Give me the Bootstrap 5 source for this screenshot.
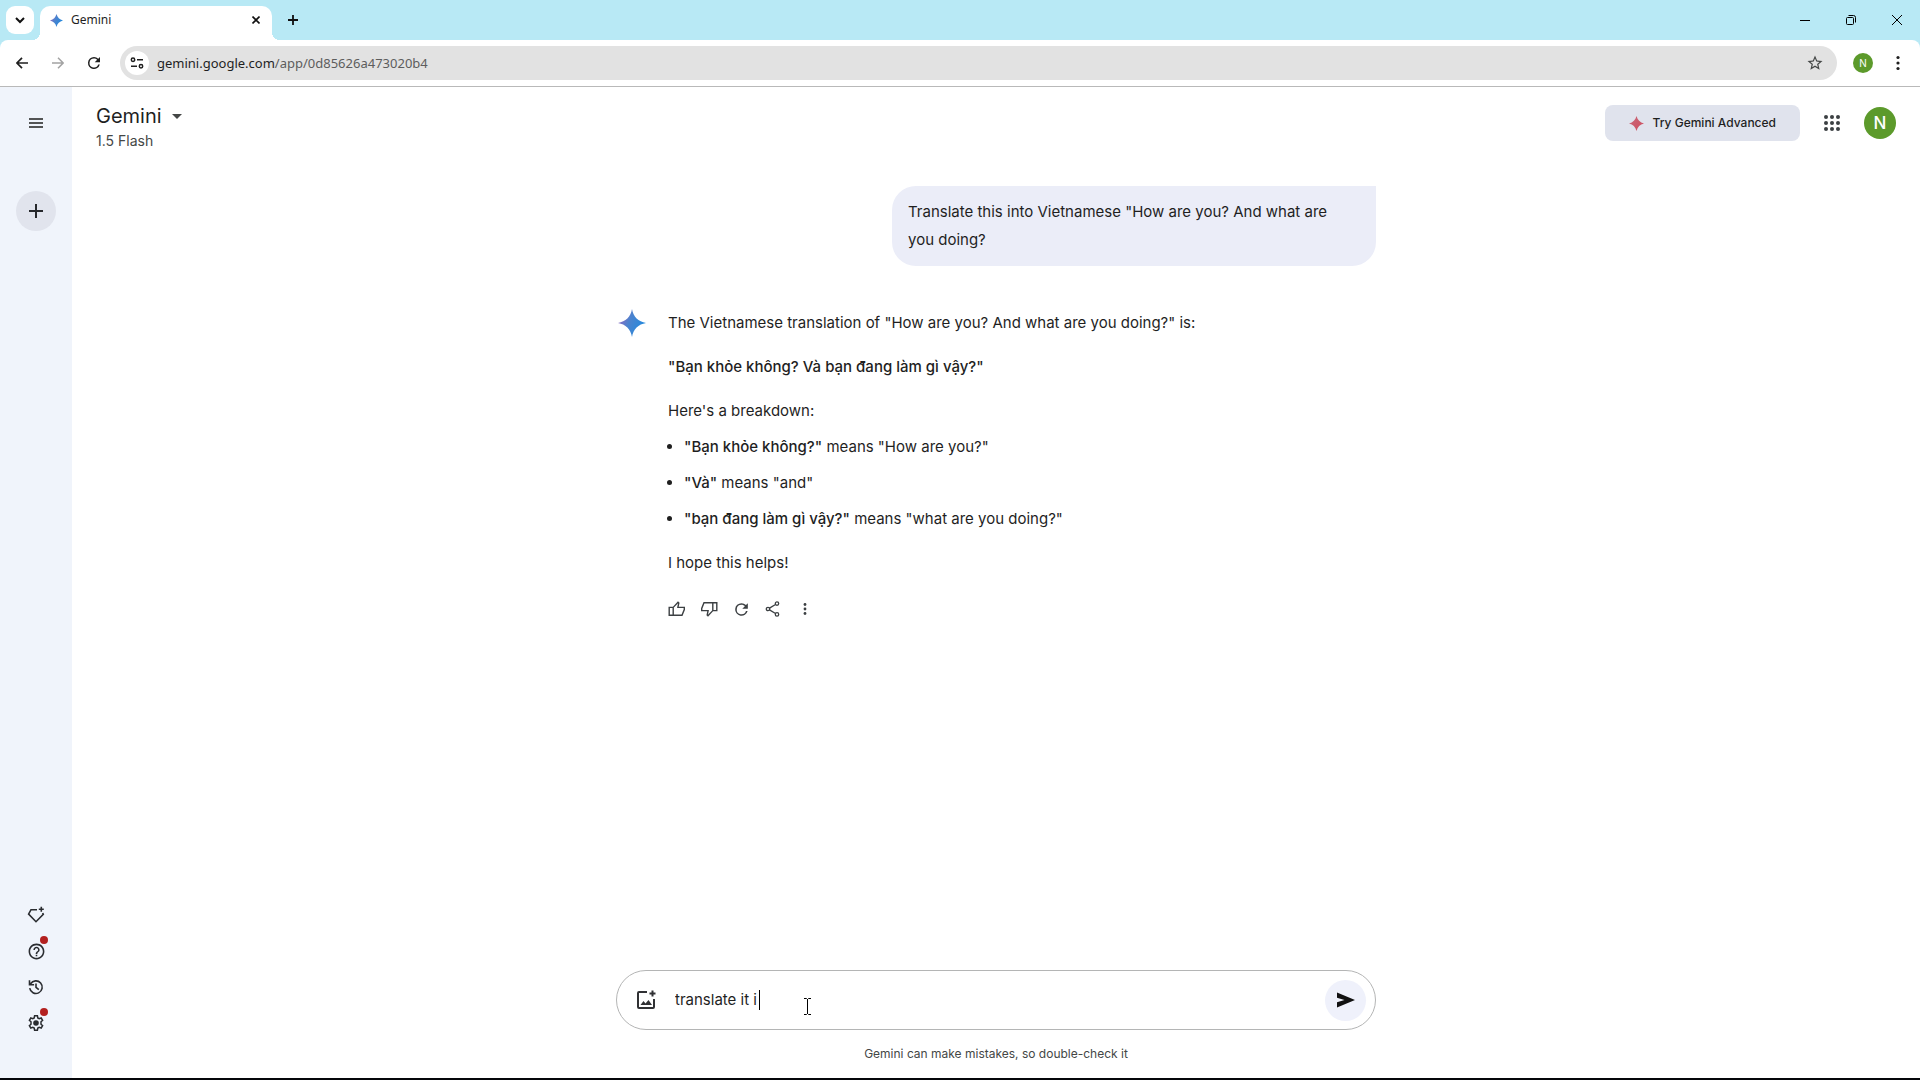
<!DOCTYPE html>
<html lang="en">
<head>
<meta charset="utf-8">
<meta name="viewport" content="width=device-width, initial-scale=1">
<title>Gemini</title>
<link href="https://cdn.jsdelivr.net/npm/bootstrap@5.3.0/dist/css/bootstrap.min.css" rel="stylesheet">
<style>
  body { font-family: Inter, "Noto Sans", sans-serif; font-size: 15px; line-height: 28px; color: #1f1f1f; background: #fff; }
  svg { display: block; flex: none; }
  button { color: inherit; }
  .icon-btn { border: 0; background: none; padding: 0; display: flex; align-items: center; justify-content: center; flex: none; }
  .ui-font { font-family: "Noto Sans", sans-serif; }

  /* browser frame */
  .tab-strip { background: #b8e9f5; height: 40px; padding-left: 6px; }
  .tab-search { width: 28px; height: 28px; margin-top: 6px; border-radius: 9px; background: #fff; }
  .page-tab { width: 232px; height: 34px; margin: 6px 0 0 6px; padding: 0 8px 6px 10px; background: #fff; border-radius: 10px 10px 0 0; font-size: 12px; position: relative; }
  .page-tab::before, .page-tab::after { content: ""; position: absolute; bottom: 0; width: 8px; height: 8px; }
  .page-tab::before { left: -8px; background: radial-gradient(circle at 0 0, transparent 8px, #fff 8px); }
  .page-tab::after { right: -8px; background: radial-gradient(circle at 100% 0, transparent 8px, #fff 8px); }
  .win-btn { width: 46px; height: 40px; color: #000; }
  .toolbar-wrap { background: #b8e9f5; }
  .toolbar { height: 47px; background: #fff; border-radius: 8px 8px 0 0; border-bottom: 1px solid #b9b9b9; padding: 0 9px 1px 4px; }
  .nav-btn { width: 36px; height: 36px; }
  .address { height: 34px; border-radius: 17px; background: #e2e2e2; margin-left: 8px; padding: 0 13px 0 5px; }
  .site-info { width: 24px; height: 24px; border-radius: 50%; background: #fff; }
  .url { font-size: 13px; line-height: 20px; color: #5d5d5d; margin-left: 8px; }
  .url b { font-weight: 400; color: #1f1f1f; }
  .avatar-sm { width: 20px; height: 20px; border-radius: 50%; background: #5c9a2b; color: #fff; font-size: 10px; }

  /* application */
  .side { width: 72px; background: #f0f4fb; padding: 18px 0 37px; flex: none; }
  .side .icon-btn { width: 40px; height: 36px; position: relative; }
  .side .new-chat { height: 40px; border-radius: 50%; background: #e1e4ed; margin-top: 50px; }
  .dot { position: absolute; width: 8px; height: 8px; border-radius: 50%; background: #b3201f; top: 3px; right: 8px; }
  .app-head { padding: 14px 24px 0; }
  .model-btn { font-size: 20px; line-height: 30px; gap: 10px; }
  .model-name { font-size: 14px; line-height: 20px; color: #444746; }
  .try-btn { height: 36px; border-radius: 8px; background: #e0e3ed; font-size: 12px; font-weight: 500; padding: 0 24px; gap: 9px; margin-top: 4px; }
  .avatar-lg { width: 32px; height: 32px; border-radius: 50%; background: #5c9a2b; color: #fff; font-size: 17px; font-weight: 500; }
  .chat-col { width: 100%; max-width: 760px; margin: 0 auto; }
  .thread { padding-top: 35px; }
  .bubble { max-width: 484px; padding: 12px 40px 12px 16px; border-radius: 24px 0 24px 24px; background: #ebedf8; }
  .answer { padding-left: 2px; gap: 22px; margin-top: 43px; }
  .answer p { margin: 0 0 16px; }
  .answer ul { margin: 0 0 16px; padding-left: 16px; }
  .answer .before-list { margin-bottom: 8px; }
  .answer li + li { margin-top: 8px; }
  .answer strong { font-weight: 500; }
  .reply-tools .icon-btn { width: 32px; height: 32px; color: #3c4043; }
  .composer { height: 60px; border: 1px solid #b4b5b5; border-radius: 30px; padding: 0 9px 0 17px; }
  .composer input { border: 0; outline: 0; padding: 0; width: 100%; background: none; color: #1f1f1f; }
  .prompt-box { margin-left: 17px; }
  .send { width: 41px; height: 41px; border-radius: 50%; background: #eff1fb; color: #111; }
  .caret { position: absolute; left: 84px; top: 4px; width: 1px; height: 20px; background: #000; }
  .pointer { position: absolute; left: 128px; top: 12px; }
  .note { font-size: 12px; line-height: 16px; color: #444746; padding: 16px 0; }
  .desk-edge { height: 2px; background: #05060a; flex: none; }
</style>
<script src="https://cdn.jsdelivr.net/npm/bootstrap@5.3.0/dist/js/bootstrap.bundle.min.js"></script>
</head>
<body>
<svg width="0" height="0" class="position-absolute" aria-hidden="true">
  <defs>
    <linearGradient id="blueSpark" x1="0" y1="0.3" x2="1" y2="0.7"><stop offset="0" stop-color="#9168c0"/><stop offset=".4" stop-color="#4b83ce"/><stop offset="1" stop-color="#1b8ae0"/></linearGradient>
    <linearGradient id="redSpark" x1="0" y1="0" x2="1" y2="1"><stop offset="0" stop-color="#c86a7c"/><stop offset="1" stop-color="#d04c5c"/></linearGradient>
    <path id="spark" d="M14 0C15.200 7.600 20.400 12.800 28 14C20.400 15.200 15.200 20.400 14 28C12.800 20.400 7.600 15.200 0 14C7.600 12.800 12.800 7.600 14 0Z"/>
    <path id="reload" d="M17.65 6.35A7.96 7.96 0 0 0 12 4a8 8 0 1 0 7.73 10h-2.08A6 6 0 1 1 12 6c1.66 0 3.14.69 4.22 1.78L13 11h7V4z"/>
  </defs>
</svg>
<div class="d-flex flex-column vh-100 overflow-hidden">
  <header>
    <div class="tab-strip d-flex">
      <button class="icon-btn tab-search" aria-label="Search tabs"><svg width="10" height="10" viewBox="0 0 10 10" fill="none" stroke="#111" stroke-width="2"><path d="M1 3l4 4 4-4"/></svg></button>
      <div class="page-tab d-flex align-items-center ui-font">
        <svg width="13" height="13" viewBox="0 0 28 28" fill="url(#blueSpark)"><path d="M14 0C16 7.600 20.400 12 28 14C20.400 16 16 20.400 14 28C12 20.400 7.600 16 0 14C7.600 12 12 7.600 14 0Z"/></svg>
        <span class="ms-2 flex-grow-1">Gemini</span>
        <button class="icon-btn p-1" aria-label="Close tab"><svg width="8" height="8" viewBox="0 0 8 8" stroke="#111" stroke-width="1.6"><path d="M.5.5l7 7M7.5.5l-7 7"/></svg></button>
      </div>
      <button class="icon-btn ms-2 px-2" aria-label="New tab"><svg width="10" height="10" viewBox="0 0 10 10" stroke="#111" stroke-width="1.8"><path d="M5 0v10M0 5h10"/></svg></button>
      <div class="d-flex ms-auto">
        <button class="icon-btn win-btn" aria-label="Minimize"><svg width="10" height="10" viewBox="0 0 10 10" stroke="currentColor"><path d="M0 5.5h10"/></svg></button>
        <button class="icon-btn win-btn" aria-label="Restore"><svg width="10" height="10" viewBox="0 0 10 10" fill="none" stroke="currentColor"><rect x=".5" y="2.5" width="7" height="7" rx="1"/><path d="M2.5.5h5a2 2 0 0 1 2 2v5"/></svg></button>
        <button class="icon-btn win-btn" aria-label="Close"><svg width="10" height="10" viewBox="0 0 10 10" stroke="currentColor"><path d="M0 0l10 10M10 0L0 10"/></svg></button>
      </div>
    </div>
    <div class="toolbar-wrap">
      <div class="toolbar d-flex align-items-center">
        <button class="icon-btn nav-btn" aria-label="Back"><svg width="12" height="12" viewBox="0 0 12 12" fill="none" stroke="#1f1f1f" stroke-width="1.7"><path d="M12 6H1M6 .8L.9 6 6 11.2"/></svg></button>
        <button class="icon-btn nav-btn" aria-label="Forward"><svg width="12" height="12" viewBox="0 0 12 12" fill="none" stroke="#a3a3a3" stroke-width="1.5"><path d="M0 6h11M6 .8L11.1 6 6 11.2"/></svg></button>
        <button class="icon-btn nav-btn" aria-label="Reload"><svg width="18" height="18" viewBox="0 0 24 24" fill="#1f1f1f"><use href="#reload"/></svg></button>
        <div class="address d-flex align-items-center flex-grow-1">
          <button class="icon-btn site-info" aria-label="Site information"><svg width="14" height="12" viewBox="0 0 14 12" fill="none" stroke="#1f1f1f" stroke-width="1.5"><circle cx="3" cy="2.7" r="1.7"/><path d="M7 2.7h6M1 9.3h6"/><circle cx="11" cy="9.3" r="1.7"/></svg></button>
          <span class="url ui-font"><b>gemini.google.com</b>/app/0d85626a473020b4</span>
          <button class="icon-btn ms-auto" aria-label="Bookmark"><svg width="18" height="18" viewBox="0 0 24 24" fill="#444746"><path d="M22 9.24l-7.19-.62L12 2 9.19 8.63 2 9.24l5.46 4.73L5.82 21 12 17.27 18.18 21l-1.63-7.03L22 9.24zM12 15.4l-3.76 2.27 1-4.28-3.32-2.88 4.38-.38L12 6.1l1.71 4.04 4.38.38-3.32 2.88 1 4.28L12 15.4z"/></svg></button>
        </div>
        <button class="icon-btn avatar-sm ms-3 me-2" aria-label="Profile">N</button>
        <button class="icon-btn px-2 ms-1" aria-label="Browser menu"><svg width="10" height="16" viewBox="0 0 10 16" fill="#1f1f1f"><circle cx="5" cy="2.5" r="1.6"/><circle cx="5" cy="8" r="1.6"/><circle cx="5" cy="13.5" r="1.6"/></svg></button>
      </div>
    </div>
  </header>

  <div class="d-flex flex-grow-1 overflow-hidden">
    <nav class="side d-flex flex-column align-items-center" aria-label="Sidebar">
      <button class="icon-btn" aria-label="Menu"><svg width="14" height="12" viewBox="0 0 14 12" stroke="#1f1f1f" stroke-width="1.7"><path d="M0 2h14M0 6h14M0 10h14"/></svg></button>
      <button class="icon-btn new-chat" aria-label="New chat"><svg width="14" height="14" viewBox="0 0 14 14" stroke="#26282c" stroke-width="2"><path d="M7 0v14M0 7h14"/></svg></button>
      <div class="mt-auto">
        <button class="icon-btn" aria-label="Gem manager"><svg width="18" height="18" viewBox="0 0 18 18" fill="none" stroke="#2a2c30" stroke-width="1.6"><path d="M10 3.700H4L1.600 8 9 15.700 16.300 8.400 15.700 7"/><path d="M14.300.8v5M11.800 3.300h5"/></svg></button>
        <button class="icon-btn" aria-label="Help"><svg width="19" height="19" viewBox="0 0 24 24" fill="#2a2c30"><path d="M11 18h2v-2h-2v2zm1-16C6.48 2 2 6.48 2 12s4.480 10 10 10 10-4.480 10-10S17.520 2 12 2zm0 18c-4.410 0-8-3.590-8-8s3.590-8 8-8 8 3.590 8 8-3.590 8-8 8zm0-14c-2.210 0-4 1.790-4 4h2c0-1.100.9-2 2-2s2 .9 2 2c0 2-3 1.750-3 5h2c0-2.250 3-2.500 3-5 0-2.210-1.790-4-4-4z"/></svg><span class="dot"></span></button>
        <button class="icon-btn" aria-label="Activity"><svg width="18" height="18" viewBox="0 0 18 18" fill="none" stroke="#2a2c30" stroke-width="1.600"><path d="M2.700 10.200A6.300 6.300 0 1 0 3.600 5.800L2.600 7M2.500 2.200v4.600h4.600M9 5.400v3.900l2.800 2.400"/></svg></button>
        <button class="icon-btn" aria-label="Settings"><svg width="18" height="18" viewBox="0 0 18 18" fill="none" stroke="#2a2c30" stroke-width="1.500"><path d="M7.600 1.800h2.800l.4 2.100 1.400.8 2-.7 1.400 2.400-1.600 1.400v2.400l1.600 1.400-1.400 2.400-2-.7-1.400.8-.4 2.100H7.600l-.4-2.100-1.400-.8-2 .7-1.400-2.400L4 10.200V7.800L2.400 6.400 3.800 4l2 .7 1.400-.8z"/><circle cx="9" cy="9" r="2.800" fill="#2a2c30" stroke="none"/></svg><span class="dot"></span></button>
      </div>
    </nav>

    <main class="d-flex flex-column flex-grow-1">
      <div class="app-head d-flex justify-content-between align-items-start">
        <div>
          <button class="icon-btn model-btn">Gemini <svg width="10" height="5" viewBox="0 0 10 5" fill="#444746"><path d="M0 0h10L5 5z"/></svg></button>
          <div class="model-name">1.5 Flash</div>
        </div>
        <div class="d-flex align-items-center">
          <button class="icon-btn try-btn"><svg width="15" height="15" viewBox="0 0 28 28" fill="url(#redSpark)"><path d="M14 0C16 7.600 20.400 12 28 14C20.400 16 16 20.400 14 28C12 20.400 7.600 16 0 14C7.600 12 12 7.600 14 0Z"/></svg>Try Gemini Advanced</button>
          <button class="icon-btn mx-4 mt-1" aria-label="Google apps"><svg width="16" height="16" viewBox="0 0 16 16" fill="#3c4043"><circle cx="2" cy="2" r="2"/><circle cx="8" cy="2" r="2"/><circle cx="14" cy="2" r="2"/><circle cx="2" cy="8" r="2"/><circle cx="8" cy="8" r="2"/><circle cx="14" cy="8" r="2"/><circle cx="2" cy="14" r="2"/><circle cx="8" cy="14" r="2"/><circle cx="14" cy="14" r="2"/></svg></button>
          <button class="icon-btn avatar-lg mt-1" aria-label="Account">N</button>
        </div>
      </div>

      <div class="chat-col thread flex-grow-1">
        <div class="d-flex justify-content-end"><div class="bubble">Translate this into Vietnamese "How are you? And what are you doing?</div></div>
        <article class="answer d-flex">
          <svg width="28" height="28" viewBox="0 0 28 28" fill="url(#blueSpark)"><use href="#spark"/></svg>
          <div>
            <p>The Vietnamese translation of "How are you? And what are you doing?" is:</p>
            <p><strong>"Bạn khỏe không? Và bạn đang làm gì vậy?"</strong></p>
            <p class="before-list">Here's a breakdown:</p>
            <ul>
              <li><strong>"Bạn khỏe không?"</strong> means "How are you?"</li>
              <li><strong>"Và"</strong> means "and"</li>
              <li><strong>"bạn đang làm gì vậy?"</strong> means "what are you doing?"</li>
            </ul>
            <p>I hope this helps!</p>
            <div class="reply-tools d-flex">
              <button class="icon-btn justify-content-start" aria-label="Good response"><svg width="18" height="18" viewBox="0 0 18 18" fill="none" stroke="currentColor" stroke-width="1.400"><path d="M5.200 15.200V7.400L10 2.200l.8.8-.9 4.400h6.400v2.200l-2.300 5.600zM5.200 7.400H1.200v7.800h4"/></svg></button>
              <button class="icon-btn justify-content-start" aria-label="Bad response"><svg width="18" height="18" viewBox="0 0 18 18" fill="none" stroke="currentColor" stroke-width="1.400"><path d="M12.800 2.800v7.800L8 15.800l-.8-.8.9-4.400H1.700V8.400L4 2.800zM12.800 10.600h4V2.800h-4"/></svg></button>
              <button class="icon-btn justify-content-start" aria-label="Redo"><svg width="19" height="19" viewBox="0 0 24 24" fill="currentColor"><use href="#reload"/></svg></button>
              <button class="icon-btn justify-content-start" aria-label="Share"><svg width="18" height="18" viewBox="0 0 18 18" fill="none" stroke="currentColor" stroke-width="1.300"><circle cx="13" cy="3.600" r="1.700"/><circle cx="4" cy="9" r="1.700"/><circle cx="13" cy="14.400" r="1.700"/><path d="M5.500 8.100l6-3.600M5.500 9.900l6 3.600"/></svg></button>
              <button class="icon-btn justify-content-start" aria-label="More"><svg width="18" height="18" viewBox="0 0 18 18" fill="currentColor"><circle cx="9" cy="4.500" r="1.400"/><circle cx="9" cy="9" r="1.400"/><circle cx="9" cy="13.500" r="1.400"/></svg></button>
            </div>
          </div>
        </article>
      </div>

      <div class="chat-col">
        <form class="composer d-flex align-items-center" onsubmit="return false">
          <button type="button" class="icon-btn" aria-label="Upload image"><svg width="24" height="24" viewBox="0 0 24 24" fill="none" stroke="#303134" stroke-width="2"><path d="M13 4H5a1 1 0 0 0-1 1v14a1 1 0 0 0 1 1h14a1 1 0 0 0 1-1v-8"/><path d="M18.500 2.500v6M15.500 5.500h6"/><path d="M6.500 17l3-4 2 2.500 3-3.500 3.500 5z" fill="#303134" stroke="none"/></svg></button>
          <div class="prompt-box position-relative flex-grow-1">
            <input type="text" aria-label="Enter a prompt" value="translate it i">
            <span class="caret"></span>
            <svg class="pointer" width="9" height="17" viewBox="0 0 9 17" fill="none" stroke="#000"><path d="M1 .5h2.500l1 1 1-1H8M4.500 1v15M1 16.500h2.500l1-1 1 1H8"/></svg>
          </div>
          <button class="icon-btn send" aria-label="Send"><svg width="18" height="16" viewBox="0 0 18 16" fill="currentColor"><path d="M0 .5L18 8 0 15.500v-5.200L7.500 8 0 5.700z"/></svg></button>
        </form>
        <div class="note text-center">Gemini can make mistakes, so double-check it</div>
      </div>
    </main>
  </div>
  <div class="desk-edge"></div>
</div>
</body>
</html>
